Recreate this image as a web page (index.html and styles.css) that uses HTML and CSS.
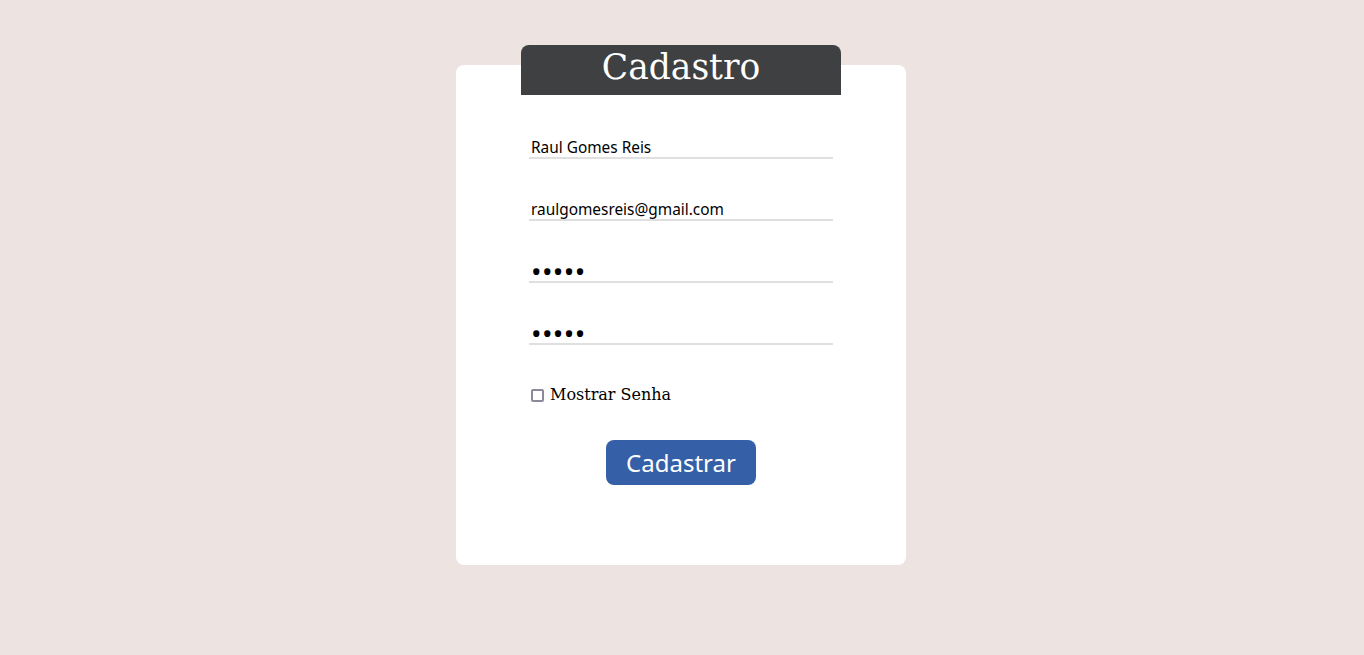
FILE: index.html
```html
<!DOCTYPE html>
<html lang="pt-BR">
<head>
<meta charset="utf-8">
<title>Cadastro</title>
<link rel="stylesheet" href="styles.css">
</head>
<body>
<main class="page">
  <form class="card">
    <h1 class="card-title">Cadastro</h1>
    <div class="fields">
      <input class="field" type="text" value="Raul Gomes Reis">
      <input class="field" type="email" value="raulgomesreis@gmail.com">
      <input class="field field-pass" type="password" value="12345">
      <input class="field field-pass" type="password" value="12345">
      <label class="show-pass"><input type="checkbox" class="check"> Mostrar Senha</label>
      <button type="button" class="submit">Cadastrar</button>
    </div>
  </form>
</main>
</body>
</html>
```

FILE: styles.css
```css
html, body {
  margin: 0;
  padding: 0;
}
body {
  background: #ede4e2;
  font-family: "DejaVu Serif", serif;
}
.page {
  display: flex;
  justify-content: center;
  padding-top: 65px;
}
.card {
  position: relative;
  width: 450px;
  height: 500px;
  background: #ffffff;
  border-radius: 8px;
  box-sizing: border-box;
  margin-right: 2px;
}
.card-title {
  position: absolute;
  top: -20px;
  left: 65px;
  width: 320px;
  height: 50px;
  margin: 0;
  background: #3f4042;
  color: #ffffff;
  border-radius: 8px 8px 0 0;
  font-family: "DejaVu Serif", serif;
  font-weight: normal;
  font-size: 34.5px;
  line-height: 44px;
  text-align: center;
}
.fields {
  display: flex;
  flex-direction: column;
  align-items: flex-start;
  padding: 72px 73px 0 73px;
}
.field {
  width: 304px;
  box-sizing: border-box;
  height: 22px;
  border: none;
  border-bottom: 2px solid #e0e0e0;
  outline: none;
  padding: 0 2px;
  margin: 0 0 40px 0;
  font-family: "Noto Sans", sans-serif;
  font-size: 15.4px;
  color: #000;
  background: transparent;
}
.field-pass {
  font-family: "Noto Sans", sans-serif;
  font-size: 28px;
  letter-spacing: 0.4px;
  line-height: 20px;
  padding-top: 0;
}
.show-pass {
  display: flex;
  align-items: center;
  gap: 6px;
  margin: -1px 0 0 2px;
  font-family: "DejaVu Serif", serif;
  font-size: 16px;
  color: #000;
  line-height: 22px;
}
.check {
  appearance: none;
  width: 13px;
  height: 13px;
  margin: 0;
  border: 2px solid #8a8a9a;
  border-radius: 2px;
  box-sizing: border-box;
  background: #fff;
}
.submit {
  align-self: center;
  margin-top: 34px;
  width: 150px;
  height: 45px;
  border: none;
  border-radius: 8px;
  background: #3560a8;
  color: #ffffff;
  font-family: "Noto Sans", sans-serif;
  font-size: 24px;
  padding: 0;
}
```
